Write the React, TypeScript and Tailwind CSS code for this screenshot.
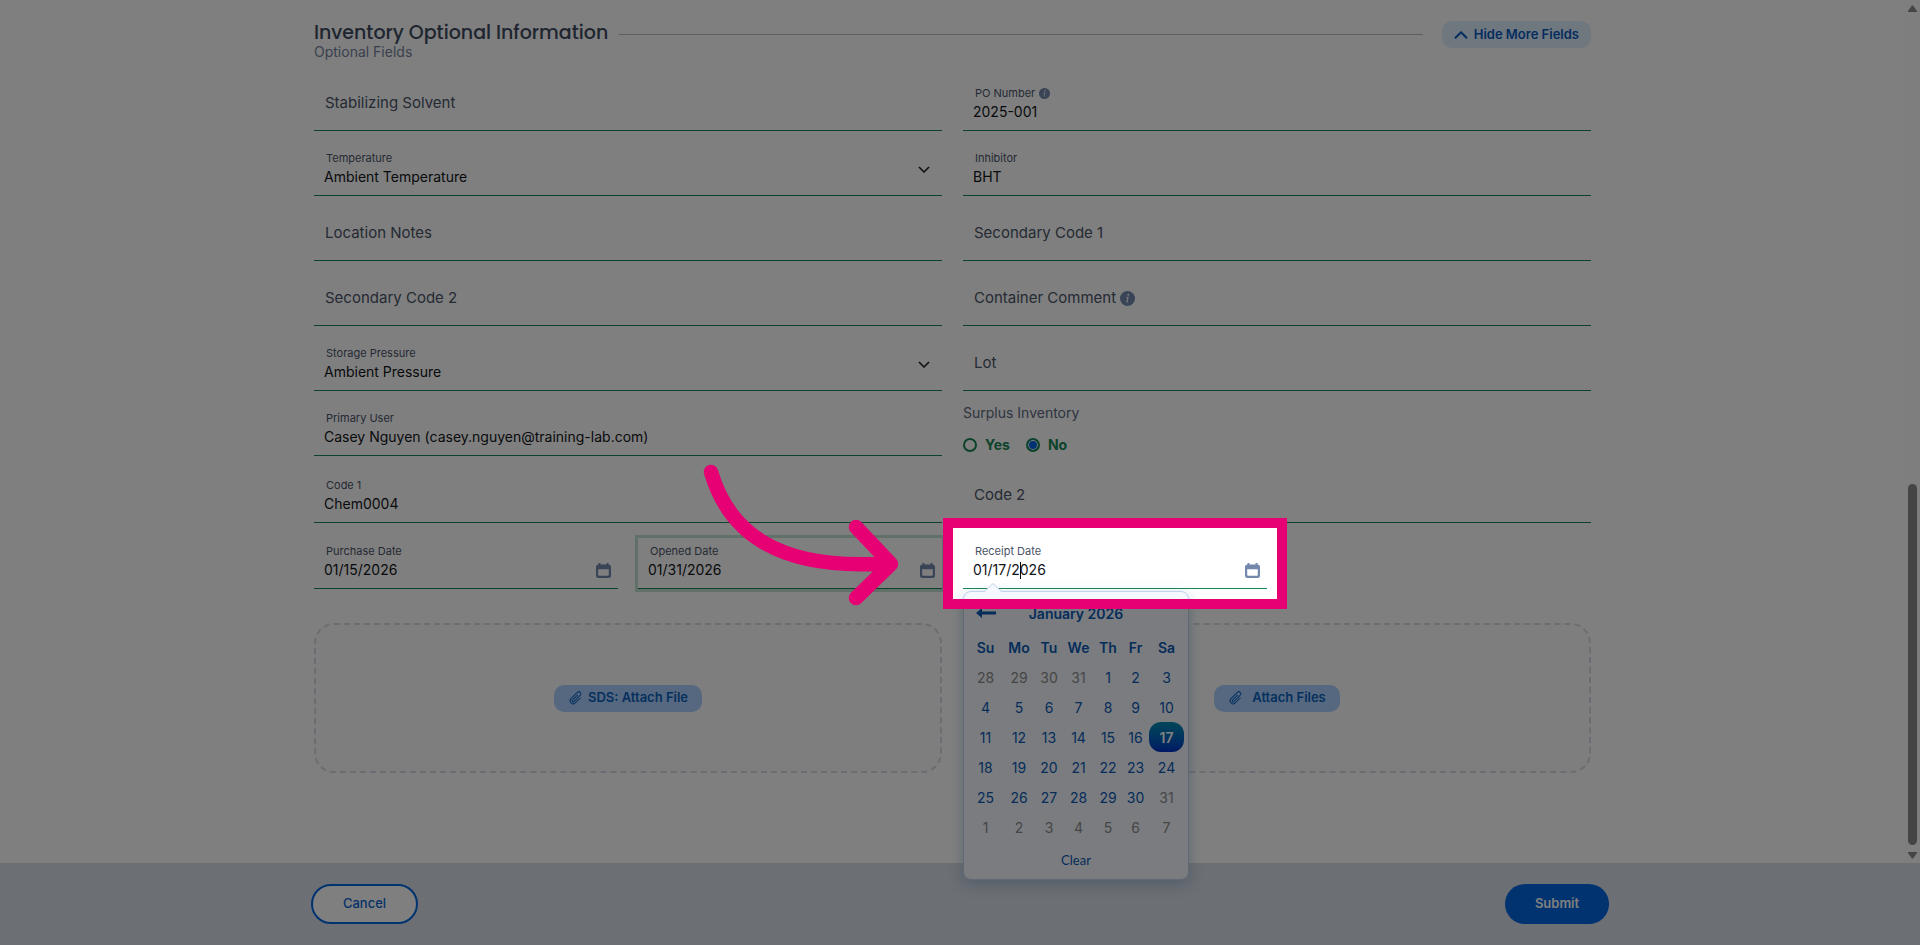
import React from 'react';
import clsx from 'clsx';
import { BsPaperclip } from 'react-icons/bs';

const weekdays = ['Su', 'Mo', 'Tu', 'We', 'Th', 'Fr', 'Sa'];

const weeks = [
  [28, 29, 30, 31, 1, 2, 3],
  [4, 5, 6, 7, 8, 9, 10],
  [11, 12, 13, 14, 15, 16, 17],
  [18, 19, 20, 21, 22, 23, 24],
  [25, 26, 27, 28, 29, 30, 31],
  [1, 2, 3, 4, 5, 6, 7]
];

const InfoIcon = ({ className }: { className: string }) => (
  <svg viewBox="0 0 16 16" className={className} aria-hidden="true">
    <circle cx="8" cy="8" r="8" fill="#7388ac" />
    <circle cx="8.9" cy="4" r="1.1" fill="#e8edf5" />
    <path d="M6.700 7.100 8.500 6.700 7.500 11.400c-.1.600.4.700 1.100.200" fill="none" stroke="#e8edf5" strokeWidth="1.3" />
  </svg>
);

const CalendarIcon = () => (
  <svg viewBox="0 0 15 15" className="size-[15px]" aria-hidden="true">
    <path
      fill="#7388ac"
      fillRule="evenodd"
      d="M2.500 0h2v1.500h6V0h2v1.500A2.500 2.500 0 0 1 15 4v8.500a2.500 2.500 0 0 1-2.500 2.500h-10A2.500 2.500 0 0 1 0 12.500V4a2.500 2.500 0 0 1 2.500-2.500zM2.200 6.200v5.800c0 .500.300.800.800.800h9c.500 0 .800-.300.800-.800V6.200z"
    />
  </svg>
);

const floatingLabel = 'pl-3 text-[11px] leading-4 text-[#4a5468]';
const valueText = 'w-full min-w-0 bg-transparent pl-2.5 text-[14px] leading-[22px] text-[#111418] outline-none';

type FieldProps = {
  id: string;
  label: string;
  value?: string;
  info?: boolean;
};

const TextField = ({ id, label, value, info }: FieldProps) => (
  <div className="pt-3.5">
    {value ? (
      <div className="border-b border-[#198754] pt-[5px] pb-[7px]">
        <label htmlFor={id} className={clsx(floatingLabel, 'flex items-center gap-1')}>
          {label}
          {info && <InfoIcon className="size-[11px]" />}
        </label>
        <input id={id} type="text" defaultValue={value} className={clsx(valueText, 'block')} />
      </div>
    ) : (
      <div className="relative border-b border-[#198754]">
        <label htmlFor={id} className="pointer-events-none absolute inset-x-0 top-[11px] flex items-center gap-1 pl-[11px] text-[15px] leading-6 text-[#4a5468]">
          {label}
          {info && <InfoIcon className="size-[15px]" />}
        </label>
        <input id={id} type="text" className="block h-[50px] w-full bg-transparent pl-2.5 text-[14px] outline-none" />
      </div>
    )}
  </div>
);

const SelectField = ({ id, label, value }: FieldProps) => (
  <div className="pt-3.5">
    <div className="relative border-b border-[#198754] pt-[5px] pb-[7px]">
      <label htmlFor={id} className={clsx(floatingLabel, 'block')}>{label}</label>
      <select id={id} defaultValue={value} className={clsx(valueText, 'block appearance-none')}>
        <option>{value}</option>
      </select>
      <svg viewBox="0 0 12 7" className="pointer-events-none absolute top-[21px] right-3 h-[7px] w-3" fill="none" stroke="#222" strokeWidth="1.6" aria-hidden="true">
        <path d="m1 1 5 5 5-5" />
      </svg>
    </div>
  </div>
);

const DateField = ({ id, label, value, focused }: FieldProps & { focused?: boolean }) => (
  <div className={clsx('border-b border-[#198754] pt-[5px] pb-[7px]', focused && 'ring-[3px] ring-[#198754]/25')}>
    <label htmlFor={id} className={clsx(floatingLabel, 'block')}>{label}</label>
    <div className="flex items-center pr-[7px]">
      <input id={id} type="text" defaultValue={value} className={valueText} />
      <button type="button" aria-label={`Choose ${label}`}>
        <CalendarIcon />
      </button>
    </div>
  </div>
);

const DatePicker = () => (
  <div className="absolute top-full left-0 z-10 mt-0.5 w-[226px] rounded-lg border border-[#c3d3ea] bg-[#f5f8ff] px-1 pt-1.5 text-[14px] text-[#0a5ab4] shadow-[0_4px_14px_rgba(60,120,170,0.35)]">
    <svg viewBox="0 0 18 10" className="absolute -top-[9px] left-5 h-2.5 w-[18px]" aria-hidden="true">
      <path d="M0 9 9 0l9 9v1H0z" fill="#f5f8ff" />
      <path d="M0 9 9 .500 18 9" fill="none" stroke="#c3d3ea" />
    </svg>
    <div className="grid h-[30px] grid-cols-[1fr_auto_1fr] items-center">
      <button type="button" aria-label="Previous month" className="justify-self-start pl-2">
        <svg viewBox="0 0 20 10" className="h-2.5 w-5" fill="#0a5ab4" aria-hidden="true">
          <path d="M0 5 6 0v3.500h14v3H6V10z" />
        </svg>
      </button>
      <span className="font-semibold">January 2026</span>
    </div>
    <table className="mt-1 w-full table-fixed text-center">
      <colgroup>
        <col className="w-[35px]" />
        <col className="w-[32px]" />
        <col className="w-[28px]" />
        <col className="w-[31px]" />
        <col className="w-[28px]" />
        <col className="w-[27px]" />
        <col className="w-[35px]" />
      </colgroup>
      <thead>
        <tr>
          {weekdays.map((day) => (
            <th key={day} className="h-[30px] p-0 font-semibold">{day}</th>
          ))}
        </tr>
      </thead>
      <tbody>
        {weeks.map((week, row) => (
          <tr key={row}>
            {week.map((day, col) => {
              const muted = (row === 0 && day > 7) || (row === 4 && day === 31) || row === 5;
              const selected = row === 2 && day === 17;
              return (
                <td key={col} className="p-0">
                  <button
                    type="button"
                    className={clsx(
                      'block h-[30px] w-full',
                      muted && 'text-[#8c8c8c]',
                      selected && 'rounded-xl bg-linear-to-b from-[#0a8cb0] to-[#0030c8] font-semibold text-white'
                    )}
                  >
                    {day}
                  </button>
                </td>
              );
            })}
          </tr>
        ))}
      </tbody>
    </table>
    <button type="button" className="block h-[37px] w-full font-['Lato',sans-serif] text-[13px]">Clear</button>
  </div>
);

const AttachBox = ({ label, gap }: { label: string; gap: string }) => (
  <div className="flex h-[150px] items-center justify-center rounded-[20px] border-2 border-dashed border-[#d5dbe5] bg-[#fdfdfd]">
    <button type="button" className={clsx('flex h-[27px] items-center rounded-[10px] bg-[#acd0ff] px-3.5 text-[13px] font-semibold text-[#0a60bd]', gap)}>
      <BsPaperclip className="size-4 rotate-45" aria-hidden="true" />
      {label}
    </button>
  </div>
);

const radioStyle = 'size-3.5 appearance-none rounded-full border-2 border-[#198754] checked:bg-[#0062e0] checked:shadow-[inset_0_0_0_1px_white]';

const App = () => {
  return (
    <div className="relative flex min-h-screen flex-col overflow-hidden bg-white font-['Inter',sans-serif]">
      <div className="flex flex-1">
        <main className="flex-1 pt-[21px]">
          <div className="mx-auto max-w-[1277px]">
            <header className="h-[45px]">
              <div className="flex h-[27px] items-center">
                <h1 className="self-start font-['Poppins','Lato',sans-serif] text-[19px] leading-6 font-medium text-[#3d4a60]">Inventory Optional Information</h1>
                <hr className="mr-[19px] ml-[11px] flex-1 border-[#b9bec8]" />
                <button type="button" className="flex h-[27px] items-center gap-1.5 rounded-[10px] bg-[#dfeeff] px-3 text-[13px] font-semibold text-[#0a5abe]">
                  <svg viewBox="0 0 14 8" className="h-2 w-3.5" fill="none" stroke="currentColor" strokeWidth="2" aria-hidden="true">
                    <path d="m1 7.300 6-6 6 6" />
                  </svg>
                  Hide More Fields
                </button>
              </div>
              <p className="-mt-[3px] text-[14px] leading-[14px] text-[#74819a]">Optional Fields</p>
            </header>

            <div className="grid grid-cols-2 items-start gap-x-[21px]">
              <TextField id="solvent" label="Stabilizing Solvent" />
              <TextField id="po-number" label="PO Number" value="2025-001" info />
              <SelectField id="temperature" label="Temperature" value="Ambient Temperature" />
              <TextField id="inhibitor" label="Inhibitor" value="BHT" />
              <TextField id="location-notes" label="Location Notes" />
              <TextField id="secondary-1" label="Secondary Code 1" />
              <TextField id="secondary-2" label="Secondary Code 2" />
              <TextField id="comment" label="Container Comment" info />
              <SelectField id="pressure" label="Storage Pressure" value="Ambient Pressure" />
              <TextField id="lot" label="Lot" />
              <TextField id="primary-user" label="Primary User" value="Casey Nguyen (casey.nguyen@training-lab.com)" />
              <fieldset className="h-[67px] pt-3">
                <legend className="float-left w-full text-[14px] leading-5 text-[#5d6a80]">Surplus Inventory</legend>
                <div className="clear-both flex items-center gap-4 pt-3 text-[14px] leading-5 font-bold text-[#198754]">
                  <label className="flex items-center gap-2">
                    <input type="radio" name="surplus" className={radioStyle} />
                    Yes
                  </label>
                  <label className="flex items-center gap-2">
                    <input type="radio" name="surplus" defaultChecked className={radioStyle} />
                    No
                  </label>
                </div>
              </fieldset>
              <TextField id="code-1" label="Code 1" value="Chem0004" />
              <TextField id="code-2" label="Code 2" />

              <div className="mt-[15px] grid grid-cols-2 gap-x-5">
                <DateField id="purchase-date" label="Purchase Date" value="01/15/2026" />
                <DateField id="opened-date" label="Opened Date" value="01/31/2026" focused />
              </div>
              <div className="mt-[15px] grid grid-cols-2 gap-x-5">
                <div className="relative">
                  <DateField id="receipt-date" label="Receipt Date" value="01/17/2026" />
                  <span className="absolute top-6 left-[57px] h-[17px] w-px bg-black" />
                  <DatePicker />
                  {/* Everything outside the frame is dimmed by its spread shadow */}
                  <div className="pointer-events-none absolute -inset-5 z-20 border-[10px] border-[#e60073] shadow-[0_0_0_3000px_rgba(0,0,0,0.5)]" />
                  <svg
                    viewBox="700 460 200 150"
                    className="pointer-events-none absolute -top-[78px] right-full z-30 mr-[63px] h-[150px] w-[200px]"
                    fill="none"
                    stroke="#e60073"
                    strokeWidth="14.500"
                    strokeLinecap="round"
                    strokeLinejoin="round"
                    aria-hidden="true"
                  >
                    <path d="M711 472C728 530 775 572 890 563M856 527l35 37-35 34" />
                  </svg>
                </div>
              </div>
            </div>

            <div className="mt-[34px] grid grid-cols-2 gap-x-[21px]">
              <AttachBox label="SDS: Attach File" gap="gap-1" />
              <AttachBox label="Attach Files" gap="gap-2" />
            </div>
          </div>
        </main>

        <div className="flex w-[15px] flex-col items-center bg-[#fcfcfc] pt-[5px] pb-1" aria-hidden="true">
          <svg viewBox="0 0 9 7" className="h-[7px] w-[9px]" fill="#8b8b8b">
            <path d="M4 .500h1L9 6v1H0V6z" />
          </svg>
          <div className="grow-[472]" />
          <div className="w-[9px] grow-[361] rounded-full bg-[#8b8b8b]" />
          <svg viewBox="0 0 9 7" className="mt-[7px] h-[7px] w-[9px]" fill="#8b8b8b">
            <path d="M4 6.500h1L9 1V0H0v1z" />
          </svg>
        </div>
      </div>

      <footer className="bg-[#d8dee8] py-[21px]">
        <div className="mx-auto flex max-w-[1298px] items-center justify-between">
          <button type="button" className="h-10 w-[107px] rounded-full border-2 border-[#0066e0] bg-white text-[13px] font-medium text-[#0a5fd0]">
            Cancel
          </button>
          <button type="button" className="h-10 w-[104px] rounded-full bg-[#0066e0] text-[13px] font-semibold text-white">
            Submit
          </button>
        </div>
      </footer>
    </div>
  );
};

export default App;
